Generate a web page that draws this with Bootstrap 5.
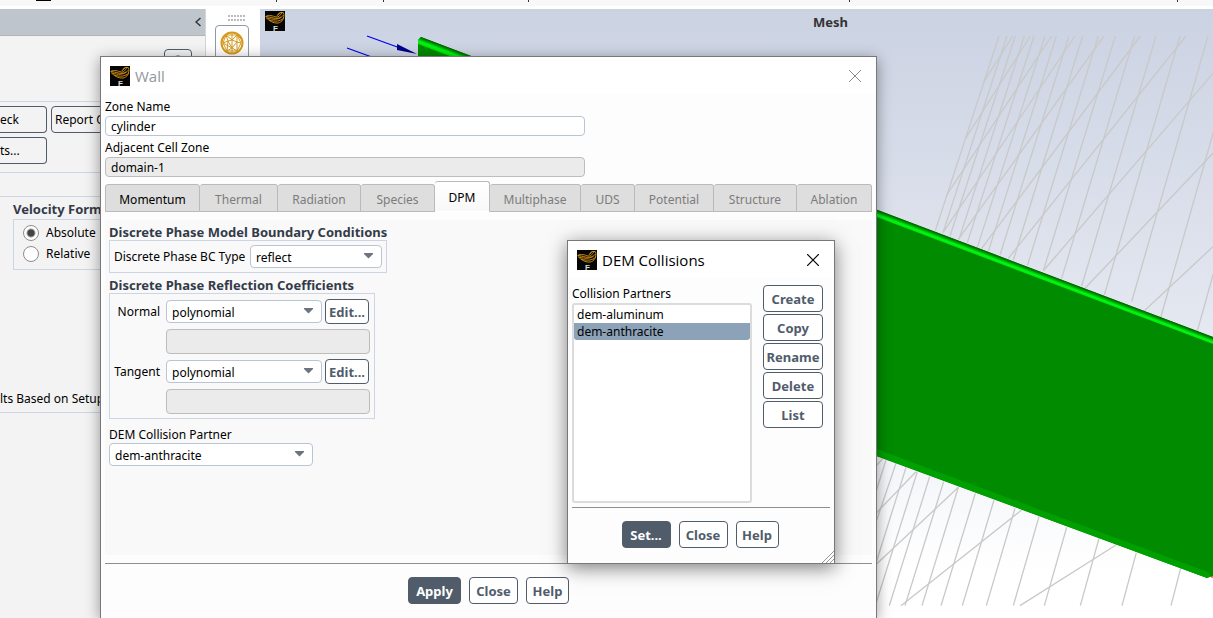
<!DOCTYPE html>
<html lang="en">
<head>
<meta charset="utf-8">
<meta name="viewport" content="width=device-width, initial-scale=1">
<title>Wall - DEM Collisions</title>
<link href="https://cdn.jsdelivr.net/npm/bootstrap@5.3.0/dist/css/bootstrap.min.css" rel="stylesheet">
<style>
:root { --slate:#515c6b; --line:#cdd5e4; --field:#b9c4d4; }
body { font:12px/16px "Noto Sans","Open Sans",sans-serif; color:#000; background:#fff; }
.strip { height:9px; background:#f8f8f8; border-bottom:3px solid #fff; }
.side { width:206px; background:#f3f3f3; border-right:1px solid #d4d4d4; }
.side-head { height:27px; background:#bfc5cc; border-bottom:1px solid #b4b4b4; }
.rule { border-bottom:1px solid var(--line); }
.tools { width:54px; padding-right:2px; }
.tool { width:34px; height:36px; border:1px solid #8d9aa8; border-radius:4px; background:#fff; }
.grip { width:17px; height:6px; background:radial-gradient(circle at 1px 1px,#bbb 1px,transparent 1px) 0 0/3px 4px; }
.view { background:linear-gradient(#cbd2e2,#e3e7f0 50%,#fff 92%); }
.view-title { font-size:13px; color:#333; right:365px; top:5px; }
.hdg { font-size:13px; font-weight:700; color:#333b49; }
.btn-f { --bs-btn-line-height:16px; --bs-btn-padding-x:0; --bs-btn-padding-y:0; --bs-btn-border-radius:4px;
  --bs-btn-color:var(--slate); --bs-btn-bg:#fff; --bs-btn-border-color:var(--slate); --bs-btn-hover-bg:#e8ecf1; --bs-btn-hover-color:var(--slate);
  --bs-btn-hover-border-color:var(--slate); --bs-btn-font-weight:700; height:27px; font-size:13px; }
.btn-f.plain { --bs-btn-font-weight:400; --bs-btn-color:#000; --bs-btn-bg:#f3f3f3; font-size:12px; }
.btn-f.solid { --bs-btn-color:#fff; --bs-btn-bg:var(--slate); --bs-btn-hover-color:#fff; --bs-btn-hover-bg:#424c59; }
.w-s { width:43px; } .w-m { width:49px; } .w-l { width:53px; } .w-xl { width:60px; }
.win { position:absolute; background:#fdfdfd; border:1px solid #77777c; box-shadow:0 3px 14px rgba(0,0,0,.4); }
.win-wall { left:100px; top:56px; bottom:0; width:777px; border-bottom:0; }
.win-dem { left:567px; top:240px; width:268px; height:324px; box-shadow:0 4px 18px rgba(0,0,0,.5); }
.win-head { height:37px; padding:0 14px 0 9px; background:#fff; font:15px/20px "Open Sans","Noto Sans",sans-serif; }
.win-close { border:0; background:none; padding:0; width:14px; height:14px; line-height:0; }
.fld { height:20px; padding:0 5px; font-size:12px; line-height:16px; color:#000; border:1px solid var(--field); border-radius:4px; }
.fld:disabled { background:#ebebeb; border-color:#bdbdbd; color:#000; opacity:1; }
.fld.tall { height:25px; }
.sel { height:23px; padding:2px 20px 0 5px; font-size:12px; line-height:18px; color:#000; border:1px solid var(--field); border-radius:4px; background-color:#fff;
  background-image:url("data:image/svg+xml,%3Csvg xmlns='http://www.w3.org/2000/svg' viewBox='0 0 9 6'%3E%3Cpath d='M0 0H9V1L4.500 5.500L0 1Z' fill='%236b7480'/%3E%3C/svg%3E"); background-size:9px 6px; background-position:right 8px top 7px; }
.nav-t .nav-link { flex:none; height:28px; padding:3px 0 0; border:1px solid #bababa; border-left-width:0; border-radius:3px 3px 0 0; background:#dedede; color:#7c7c7c; font-size:12px; line-height:16px; }
.nav-t .nav-link:first-child { border-left-width:1px; color:#000; }
.nav-t .nav-link.active { height:31px; background:linear-gradient(#fff,#f8f8f8); color:#000; border-color:#bababa #bababa transparent; }
.pane { height:335px; background:#f9f9f9; padding:4px; }
.frame { border:1px solid var(--line); }
.coef { display:grid; grid-template-columns:50px 156px 44px; column-gap:6px; row-gap:5px; align-items:center; }
.coef .wide { grid-column:2 / 4; width:204px; }
.coef .btn-f { height:25px; width:44px; margin-left:-3px; }
.foot { border-top:1px solid #8f8f8f; padding-top:13px; }
.partners { width:180px; height:200px; border:2px solid #dcdcdc; border-radius:3px; background:#fff; padding-top:1px; }
.partners .list-group-item { border:0; padding:0 3px; height:17px; line-height:17px; font-size:12px; color:#000; background:none; }
.partners .list-group-item.active { background:#8ca2b8; color:#000; margin:0; }
.resize-grip { right:0; bottom:0; }
.rad { width:16px; height:16px; margin:0; border:1px solid #8c8c8c; background-color:#fff; }
.rad:checked { background-color:#fff; border-color:#8c8c8c; background-image:radial-gradient(circle,#444 3px,#fff 5px); }
</style>
</head>
<body class="vh-100 overflow-hidden position-relative d-flex flex-column">
<svg class="d-none" aria-hidden="true">
  <symbol id="logo" viewBox="0 0 20 20">
    <path d="M0 0H20V20H0Z" fill="#050505"/>
    <g fill="none" stroke="#c98a12" stroke-width="1">
      <path d="M.5 5.500C4 3.500 8 5 11 6C14 6.500 15 4 17.500 1.500C15.500 1 14.500 2 13 4"/>
      <path d="M1 6.500C4 9.500 8 12.500 13 12C17 11.500 20 7 18.500 1.500"/>
      <path d="M2 7C8 9 15 9 18.500 4M4 9C10 11 15 10.500 19 7M1 5.500C6 6 12 9 16 6M12 5C13 2.500 15 1 18 1.500"/>
    </g>
    <text x="8" y="19.500" font-family="Liberation Sans" font-weight="700" font-size="8" fill="#ddd">F</text>
  </symbol>
</svg>

<div class="strip flex-shrink-0">
  <svg class="d-block" width="1213" height="3" aria-hidden="true"><path d="M36 0H51V1H36Z" fill="#000"/><path d="M276.500 0V2M383.500 0V2M528.500 0V2M849.500 0V2M1177.500 0V2" stroke="#333"/></svg>
</div>

<main class="d-flex flex-grow-1 overflow-hidden">
  <aside class="side flex-shrink-0 overflow-hidden text-nowrap">
    <div class="side-head d-flex align-items-center justify-content-end pe-1">
      <svg width="6" height="10" aria-hidden="true"><path d="M5.500 1L1 5L5.500 9" fill="none" stroke="#333" stroke-width="1.500"/></svg>
    </div>
    <div class="rule d-flex justify-content-end" style="height:66px;padding:13px 13px 0 0">
      <button class="btn btn-f plain" style="width:28px" aria-label="Help"><svg width="16" height="18"><circle cx="8" cy="9" r="7" fill="none" stroke="#333b49"/></svg></button>
    </div>
    <div class="rule d-flex flex-column gap-1 pt-1" style="height:71px">
      <div class="d-flex gap-1">
        <button class="btn btn-f plain rounded-start-0 border-start-0 text-start" style="width:47px">eck</button>
        <button class="btn btn-f plain text-start" style="width:100px;padding-left:3px">Report Q</button>
      </div>
      <button class="btn btn-f plain rounded-start-0 border-start-0 text-start" style="width:47px">ts...</button>
    </div>
    <div class="rule" style="height:24px"></div>
    <div class="rule" style="height:216px;padding:4px 12px 0 13px">
      <div class="hdg">Velocity Form</div>
      <div class="frame d-flex flex-column" style="height:51px;padding:5px 9px;gap:5px;margin-top:2px">
        <div class="d-flex align-items-center"><input class="rad form-check-input" type="radio" name="vf" id="abs" checked><label for="abs" style="padding-left:7px">Absolute</label></div>
        <div class="d-flex align-items-center"><input class="rad form-check-input" type="radio" name="vf" id="rel"><label for="rel" style="padding-left:7px">Relative</label></div>
      </div>
      <div style="margin:121px 0 0 -13px">lts Based on Setup</div>
    </div>
  </aside>

  <div class="tools d-flex flex-column align-items-center flex-shrink-0 pt-1">
    <div class="grip ms-2" style="margin-top:2px"></div>
    <button class="tool p-0 mt-1" aria-label="Display mesh">
      <svg width="24" height="24" viewBox="0 0 24 24" fill="none" stroke="#d59a1d"><circle cx="12" cy="12" r="10.500" stroke-width="2"/><path d="M6 4L17 4L21 12L17 20H7L3 12ZM6 4L12 9L17 4M3 12L8 10L12 9L17 11L21 12M8 10L6 4M8 10L7 20M8 10L12 17L17 11L17 4M17 11V20L12 17L7 20M3 12L12 17M12 2V9M12 17V22M1 10L6 4M23 10L17 4M12 9V17"/></svg>
    </button>
  </div>

  <section class="view flex-grow-1 position-relative overflow-hidden">
    <svg class="w-100 h-100 d-block" viewBox="260 9 953 609" preserveAspectRatio="xMaxYMin slice" aria-label="Mesh">
      <defs><linearGradient id="rim" gradientUnits="userSpaceOnUse" x1="876" y1="209" x2="873.500" y2="215.600"><stop offset="0" stop-color="#005400"/><stop offset=".25" stop-color="#008400"/><stop offset=".5" stop-color="#00c408"/><stop offset=".7" stop-color="#00f818"/><stop offset="1" stop-color="#00e800"/></linearGradient></defs>
      <g transform="translate(780 0) scale(.33333)" stroke="#c9c9c9" stroke-width="4" fill="none">
        <path d="M657 108L466 692M681 108L489 698M706 108L510 708M733 108L537 718M762 108L562 728M795 108L592 742M829 108L625 754M867 108L660 765M908 108L700 780M955 108L742 797M1006 108L790 812M1064 108L845 835M1128 108L905 858M1200 108L973 885M1284 108L1055 905M1382 108L1140 960M1500 108L1250 1000"/>
        <path d="M698 108L612 245M751 108L555 418M815 108L500 585M885 108L489 698M972 108L535 718M1081 108L605 745M1218 108L685 775M1299 220L792 810M1299 460L915 865M1299 740L1090 935"/>
      </g>
      <g transform="translate(860 300) scale(.33333)" stroke="#c9c9c9" stroke-width="4" fill="none">
        <path d="M962 805L933 917M829 758L786 917M717 715L661 917M620 682L553 917M537 650L460 917M465 625L379 917M402 600L307 917M346 580L243 917M295 562L186 917M251 545L135 917M209 530L88 917M172 515L46 917M138 502L40 815M108 490L40 690M78 480L40 600"/>
        <path d="M768 735L480 917M485 630L123 917M295 562L40 801M168 515L40 648M68 476L40 507"/>
      </g>
      <path d="M418 40L421 37L1213 337V576L1207 578L876 456L418 282Z" fill="#008b00"/>
      <path d="M418 279L1208 572L1211 576L1207 578L418 286Z" fill="#00a000"/>
      <path d="M421 37L1213 337V344L418 44V40Z" fill="url(#rim)"/>
      <path d="M1211 577H1213" stroke="#e00"/>
      <path d="M347 48L380 60M367 36L400 48" stroke="#0000f0" stroke-width="1.300"/>
      <path d="M397 44L417 54L397 50Z" fill="#00008b"/>
    </svg>
    <svg class="position-absolute" style="left:5px;top:2px" width="20" height="20" aria-hidden="true"><use href="#logo"/></svg>
    <div class="view-title position-absolute fw-bold">Mesh</div>
  </section>
</main>

<div class="win win-wall" role="dialog" aria-label="Wall">
  <div class="win-head d-flex align-items-center">
    <svg width="20" height="20" aria-hidden="true"><use href="#logo"/></svg>
    <span class="text-secondary opacity-75" style="padding-left:5px">Wall</span>
    <button class="win-close ms-auto" aria-label="Close window"><svg width="12" height="12"><path d="M0 0L12 12M12 0L0 12" stroke="#8b8b8b"/></svg></button>
  </div>
  <div class="px-1 pt-1">
    <div style="width:480px">
      <label for="zone" class="d-block" style="margin:1px 0">Zone Name</label>
      <input id="zone" class="form-control fld mb-1" value="cylinder">
      <label for="adj" class="d-block" style="margin-bottom:1px">Adjacent Cell Zone</label>
      <input id="adj" class="form-control fld" value="domain-1" disabled>
    </div>
    <nav class="nav-t d-flex align-items-end" style="height:31px;margin:4px 0 8px" role="tablist">
      <button class="nav-link" style="width:95px">Momentum</button><button class="nav-link" style="width:78px">Thermal</button><button class="nav-link" style="width:83px">Radiation</button><button class="nav-link" style="width:74px">Species</button><button class="nav-link active" style="width:55px">DPM</button><button class="nav-link" style="width:91px">Multiphase</button><button class="nav-link" style="width:54px">UDS</button><button class="nav-link" style="width:79px">Potential</button><button class="nav-link" style="width:83px">Structure</button><button class="nav-link" style="width:75px">Ablation</button>
    </nav>
    <div class="pane">
      <div class="hdg">Discrete Phase Model Boundary Conditions</div>
      <div class="frame d-flex align-items-center px-1" style="width:278px;height:33px">
        <label for="bc" class="flex-grow-1 text-nowrap">Discrete Phase BC Type</label>
        <select id="bc" class="form-select sel flex-shrink-0" style="width:132px"><option>reflect</option></select>
      </div>
      <div class="hdg mt-1">Discrete Phase Reflection Coefficients</div>
      <div class="frame coef" style="width:266px;padding:5px 0 4px;">
        <label for="nrm" class="text-end">Normal</label>
        <select id="nrm" class="form-select sel"><option>polynomial</option></select>
        <button class="btn btn-f">Edit...</button>
        <input class="form-control fld tall wide" aria-label="Normal coefficients" disabled>
        <label for="tan" class="text-end">Tangent</label>
        <select id="tan" class="form-select sel"><option>polynomial</option></select>
        <button class="btn btn-f">Edit...</button>
        <input class="form-control fld tall wide" aria-label="Tangent coefficients" disabled>
      </div>
      <label for="dem" class="d-block mt-2">DEM Collision Partner</label>
      <select id="dem" class="form-select sel" style="width:204px"><option>dem-anthracite</option></select>
    </div>
    <div class="foot d-flex justify-content-center gap-2 mt-2">
      <button class="btn btn-f solid w-l">Apply</button>
      <button class="btn btn-f w-m">Close</button>
      <button class="btn btn-f w-s">Help</button>
    </div>
  </div>
</div>

<div class="win win-dem" role="dialog" aria-label="DEM Collisions">
  <div class="win-head d-flex align-items-center">
    <svg width="20" height="20" aria-hidden="true"><use href="#logo"/></svg>
    <span style="padding-left:5px">DEM Collisions</span>
    <button class="win-close ms-auto" aria-label="Close window"><svg width="12" height="12"><path d="M0 0L12 12M12 0L0 12" stroke="#000" stroke-width="1.200"/></svg></button>
  </div>
  <div class="px-1">
    <div class="d-flex justify-content-between" style="padding:7px 7px 4px 0">
      <div>
        <div style="margin:1px 0">Collision Partners</div>
        <div class="partners list-group">
          <button class="list-group-item list-group-item-action mt-0">dem-aluminum</button>
          <button class="list-group-item list-group-item-action active">dem-anthracite</button>
        </div>
      </div>
      <div class="d-flex flex-column w-xl" style="gap:2px">
        <button class="btn btn-f">Create</button>
        <button class="btn btn-f">Copy</button>
        <button class="btn btn-f">Rename</button>
        <button class="btn btn-f">Delete</button>
        <button class="btn btn-f">List</button>
      </div>
    </div>
    <div class="foot d-flex justify-content-center gap-2" style="padding-right:2px">
      <button class="btn btn-f solid w-m">Set...</button>
      <button class="btn btn-f w-m">Close</button>
      <button class="btn btn-f w-s">Help</button>
    </div>
  </div>
  <svg class="resize-grip position-absolute" width="13" height="13" aria-hidden="true"><path d="M1 13L13 1M5 13L13 5M9 13L13 9" stroke="#999"/></svg>
</div>
<script src="https://cdn.jsdelivr.net/npm/bootstrap@5.3.0/dist/js/bootstrap.bundle.min.js"></script>
</body>
</html>
